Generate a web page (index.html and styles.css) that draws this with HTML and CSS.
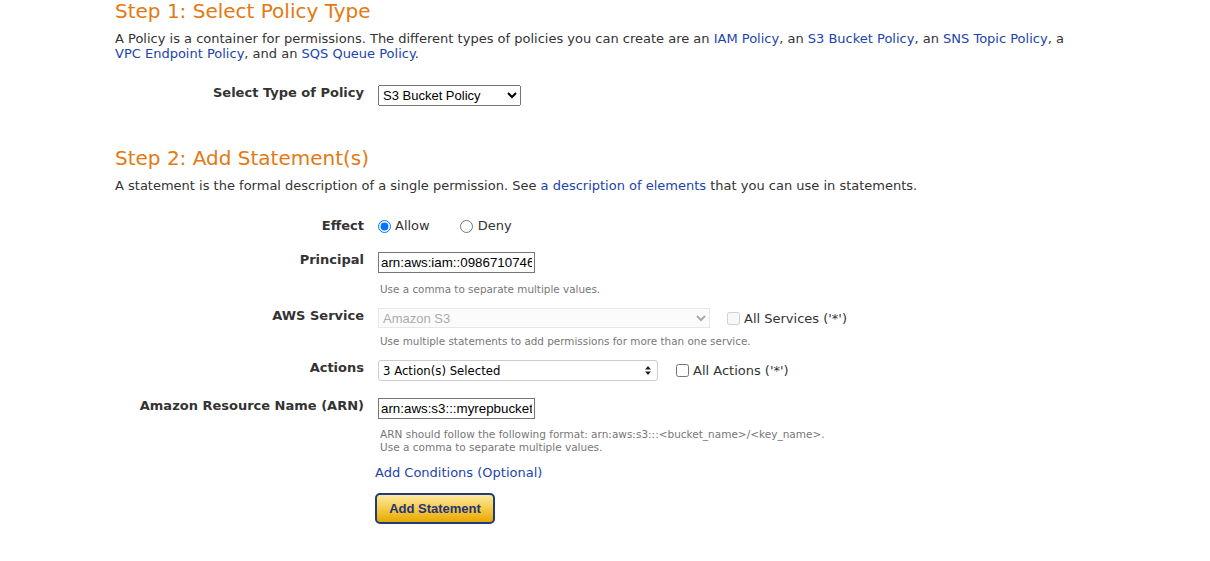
FILE: index.html
```html
<!DOCTYPE html>
<html>
<head>
<meta charset="utf-8">
<link rel="stylesheet" href="styles.css">
</head>
<body>
<div class="page">
  <h2 class="step">Step 1: Select Policy Type</h2>
  <p class="desc">A Policy is a container for permissions. The different types of policies you can create are an <a href="#">IAM Policy</a>, an <a href="#">S3 Bucket Policy</a>, an <a href="#">SNS Topic Policy</a>, a <a href="#">VPC Endpoint Policy</a>, and an <a href="#">SQS Queue Policy</a>.</p>

  <div class="form form1">
    <div class="row r-type">
      <label class="lbl">Select Type of Policy</label>
      <div class="ctl">
        <select class="sel sel-type"><option>S3 Bucket Policy</option></select>
      </div>
    </div>
  </div>

  <h2 class="step step2">Step 2: Add Statement(s)</h2>
  <p class="desc">A statement is the formal description of a single permission. See <a href="#">a description of elements</a> that you can use in statements.</p>

  <div class="form form2">
    <div class="row r-effect">
      <label class="lbl">Effect</label>
      <div class="ctl radios">
        <label class="opt"><input type="radio" name="eff" checked> Allow</label>
        <label class="opt opt-deny"><input type="radio" name="eff"> Deny</label>
      </div>
    </div>

    <div class="row r-principal">
      <label class="lbl">Principal</label>
      <div class="ctl">
        <input class="txt" type="text" value="arn:aws:iam::098671074615:root">
        <div class="hint">Use a comma to separate multiple values.</div>
      </div>
    </div>

    <div class="row r-service">
      <label class="lbl">AWS Service</label>
      <div class="ctl">
        <div class="inline">
          <select class="sel sel-service" disabled><option>Amazon S3</option></select>
          <label class="chk chk-dis"><input type="checkbox" disabled> All Services ('*')</label>
        </div>
        <div class="hint hint-svc">Use multiple statements to add permissions for more than one service.</div>
      </div>
    </div>

    <div class="row r-actions">
      <label class="lbl">Actions</label>
      <div class="ctl">
        <div class="inline">
          <div class="fake-sel">
            <span>3 Action(s) Selected</span>
            <svg class="updown" width="6" height="9" viewBox="0 0 6 9"><path d="M0 3.5 L3 0 L6 3.5Z M0 5.5 L3 9 L6 5.5Z" fill="#222"/></svg>
          </div>
          <label class="chk"><input type="checkbox"> All Actions ('*')</label>
        </div>
      </div>
    </div>

    <div class="row r-arn">
      <label class="lbl">Amazon Resource Name (ARN)</label>
      <div class="ctl">
        <input class="txt" type="text" value="arn:aws:s3:::myrepbucket">
        <div class="hint hint-arn">ARN should follow the following format: arn:aws:s3:::&lt;bucket_name&gt;/&lt;key_name&gt;.<br>Use a comma to separate multiple values.</div>
      </div>
    </div>

    <div class="row r-cond">
      <div class="lbl"></div>
      <div class="ctl ctl-cond">
        <a href="#" class="cond">Add Conditions (Optional)</a>
        <button class="btn" type="button">Add Statement</button>
      </div>
    </div>
  </div>
</div>
</body>
</html>
```

FILE: styles.css
```css
html, body {
  margin: 0;
  padding: 0;
  background: #fff;
}
body {
  font-family: Verdana, "DejaVu Sans", sans-serif;
  color: #333;
  font-size: 13px;
}
.page {
  padding-left: 115px;
  padding-right: 120px;
}
a {
  color: #1a44ae;
  text-decoration: none;
}
.step {
  margin: 0;
  font-weight: normal;
  font-size: 20px;
  line-height: 22px;
  color: #e47911;
}
.step2 {
  margin-top: 41px;
}
.desc {
  margin: 9px 0 0 0;
  font-size: 13px;
  line-height: 15px;
}
.form {
  display: flex;
  flex-direction: column;
}
.form1 {
  margin-top: 24px;
}
.form2 {
  margin-top: 25px;
}
.row {
  display: grid;
  grid-template-columns: 249px 1fr;
  column-gap: 14px;
  align-items: start;
}
.lbl {
  text-align: right;
  font-weight: bold;
  font-size: 13px;
  line-height: 16px;
  color: #333;
}
.sel {
  font-family: Arial, "Liberation Sans", sans-serif;
  font-size: 13px;
  height: 20px;
  color: #000;
  margin: 0;
}
.sel-type {
  width: 143px;
  height: 21px;
  margin-top: 0;
}
.radios {
  display: flex;
  align-items: center;
  font-size: 13px;
  line-height: 16px;
}
.opt {
  display: flex;
  align-items: center;
  gap: 4px;
}
.opt input { margin: 0; width: 13px; height: 13px; }
.opt-deny { margin-left: 30px; }
.opt-deny input { margin-right: 1px; }

.r-principal { margin-top: 18px; }
.txt {
  font-family: Arial, "Liberation Sans", sans-serif;
  font-size: 13.33px;
  width: 157px;
  height: 21px;
  box-sizing: border-box;
  border: 1px solid #767676;
  padding: 1px 2px;
  margin: 0;
  color: #000;
}
.hint {
  font-size: 10.4px;
  line-height: 13px;
  color: #777;
  margin-top: 10px;
  padding-left: 2px;
}
.r-service { margin-top: 12px; }
.inline {
  display: flex;
  align-items: center;
}
.sel-service {
  width: 332px;
  color: #888;
  border: 1px solid #ddd;
  background: #fafafa;
}
.hint-svc { margin-top: 7px; }
.chk {
  display: flex;
  align-items: center;
  gap: 4px;
  font-size: 13px;
  margin-left: 18px;
}
.chk input { margin: 0; width: 13px; height: 13px; }
.chk-dis { margin-left: 17px; }

.r-actions { margin-top: 12px; }
.fake-sel {
  width: 280px;
  height: 21px;
  box-sizing: border-box;
  border: 1px solid #ccc;
  border-radius: 3px;
  background: #fff;
  display: flex;
  align-items: center;
  justify-content: space-between;
  padding: 0 6px 0 4px;
  font-size: 11.7px;
  color: #000;
}
.r-arn { margin-top: 17px; }
.hint-arn { margin-top: 9px; font-size: 10.5px; }

.ctl-cond {
  display: flex;
  flex-direction: column;
  align-items: flex-start;
  margin-left: -3px;
}
.r-cond { margin-top: 11px; }
.cond {
  font-size: 13px;
  line-height: 16px;
}
.btn {
  margin-top: 12px;
  width: 120px;
  height: 31px;
  border: 2px solid #1d3b7d;
  border-radius: 5px;
  background: linear-gradient(#fde9a0 0%, #f6cb4a 50%, #e6a800 100%);
  font-family: Arial, "Liberation Sans", sans-serif;
  font-weight: bold;
  font-size: 13px;
  color: #21337e;
  padding: 0;
}
```
